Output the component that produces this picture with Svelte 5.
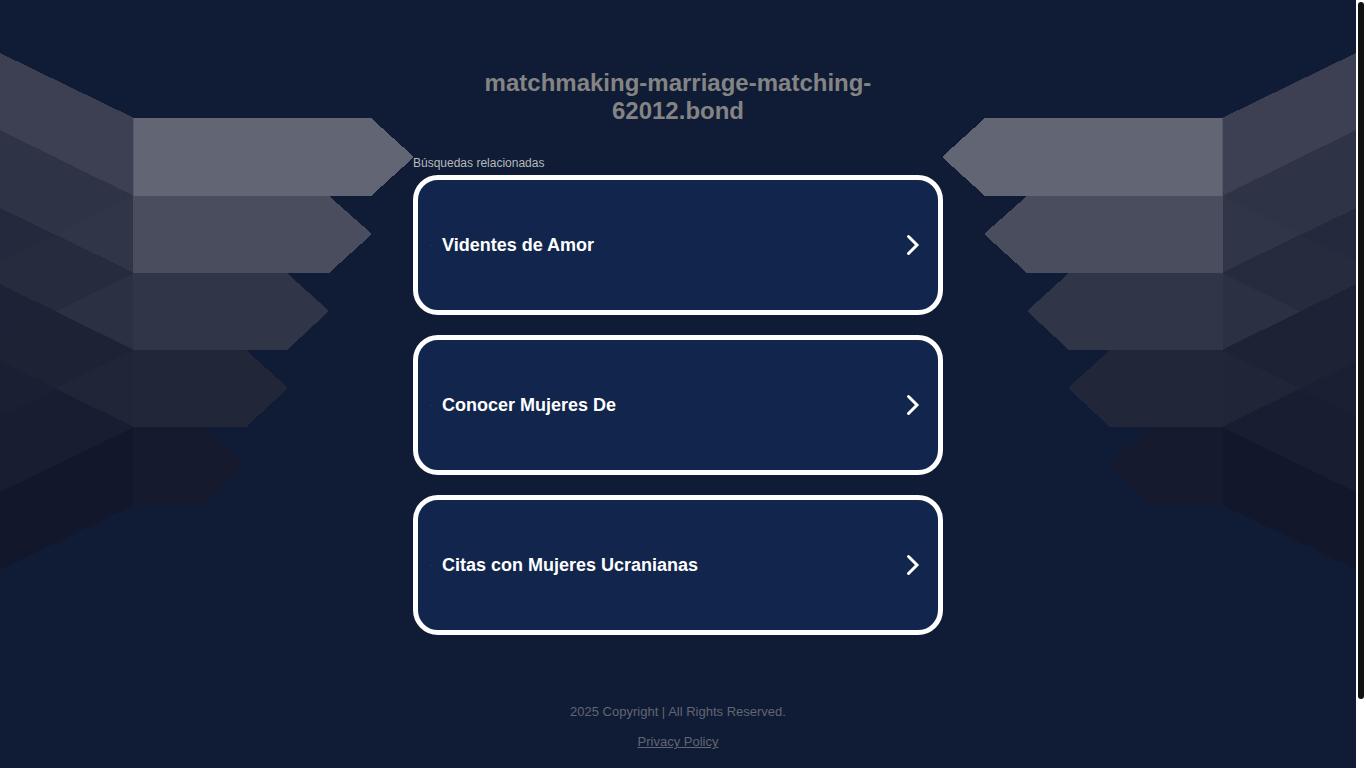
<script>
  const searches = ['Videntes de Amor', 'Conocer Mujeres De', 'Citas con Mujeres Ucranianas'];

  // Folded ribbons on the outer side, painted back to front.
  const folds = [
    ['0,53 134,118 134,505 0,570', '#3c4052'],
    ['0,130 134,196 134,505 0,570', '#2e3345'],
    ['134,196 134,505 0,570 0,261', '#313548'],
    ['0,208 134,273 134,505 0,570', '#25293d'],
    ['57,235 134,273 134,505 0,570 0,261', '#272b3e'],
    ['134,273 134,505 0,570 0,339', '#2b3042'],
    ['0,284 134,350 134,505 0,570', '#1e2236'],
    ['0,339 57,312 134,350 134,505 0,570', '#1d2235'],
    ['134,350 134,505 0,570 0,416', '#202538'],
    ['0,361 134,427 134,505 0,570', '#1a2033'],
    ['0,416 57,389 134,427 134,505 0,570', '#181d31'],
    ['134,427 134,505 0,570 0,492', '#12172b']
  ];

  const arrows = [
    ['133,118 371,118 414,157 371,196 133,196', '#626573'],
    ['133,196 329,196 372,234 329,273 133,273', '#4a4d5d'],
    ['133,273 287,273 329,311 287,350 133,350', '#303547'],
    ['133,350 246,350 288,388 246,427 133,427', '#212639'],
    ['133,427 206,427 246,465 206,505 133,505', '#151a2e']
  ];
</script>

{#snippet ribbons(flipped)}
  <svg class="ribbons" class:flipped viewBox="0 0 413 570" aria-hidden="true">
    {#each [...folds, ...arrows] as [points, fill]}
      <polygon {points} {fill} />
    {/each}
    <path d="M133 118h1v155h-1z" fill="#4a4e5f" opacity=".6" />
  </svg>
{/snippet}

<div class="window">
  <div class="page">
    {@render ribbons(false)}
    <div class="column">
      <main>
        <h1>matchmaking-marriage-matching-62012.bond</h1>
        <p class="related">Búsquedas relacionadas</p>
        <nav>
          {#each searches as search}
            <a class="card" href="#search">
              <span class="bullet"></span>
              <span class="label">{search}</span>
              <svg class="chevron" viewBox="0 0 14 22" aria-hidden="true">
                <path d="M2.5 2.5L11 11l-8.500 8.500" />
              </svg>
            </a>
          {/each}
        </nav>
      </main>
      <footer>
        <p>2025 Copyright | All Rights Reserved.</p>
        <a href="#privacy">Privacy Policy</a>
      </footer>
    </div>
    {@render ribbons(true)}
  </div>
  <div class="track"><div class="thumb"></div></div>
</div>

<style>
  :global(body) {
    margin: 0;
    background: #101c35;
  }
  .window {
    display: flex;
    min-height: 100vh;
    font-family: "Liberation Sans", Arial, sans-serif;
  }
  .page {
    flex: 1;
    display: grid;
    grid-template-columns: minmax(0, 1fr) minmax(0, 530px) minmax(0, 1fr);
    align-items: start;
    background: #101c35;
  }
  .ribbons {
    display: block;
    width: 100%;
    overflow: visible;
    shape-rendering: crispEdges;
  }
  .flipped {
    transform: scaleX(-1);
  }
  .column {
    padding-top: 69px;
  }
  h1 {
    margin: 0 auto;
    max-width: 480px;
    font-size: 24px;
    line-height: 28px;
    text-align: center;
    color: #848484;
  }
  .related {
    margin: 30px 0 4px;
    font-size: 12px;
    line-height: 16px;
    color: #b7b9bd;
  }
  nav {
    display: flex;
    flex-direction: column;
    gap: 20px;
  }
  .card {
    display: flex;
    align-items: center;
    box-sizing: border-box;
    min-height: 140px;
    padding: 0 18px 0 13px;
    border: 5px solid #fff;
    border-radius: 25px;
    background: #12264d;
    color: #fff;
    font-size: 18px;
    font-weight: 700;
    line-height: 22px;
    text-decoration: none;
  }
  .bullet {
    width: 1px;
    height: 1px;
    margin-right: 10px;
    background: #2c3e60;
  }
  .label {
    flex: 1;
  }
  .chevron {
    width: 14px;
    height: 22px;
    fill: none;
    stroke: #fff;
    stroke-width: 3;
    stroke-linecap: round;
  }
  footer {
    margin-top: 69px;
    padding-bottom: 16px;
    text-align: center;
    font-size: 13px;
    line-height: 16px;
    color: #626573;
  }
  footer p {
    margin: 0 0 14px;
  }
  footer a {
    color: #626573;
  }
  .track {
    box-sizing: border-box;
    width: 10px;
    padding: 2px;
    background: #fff;
    display: grid;
    grid-template-rows: 697fr 67fr;
  }
  .thumb {
    border-radius: 3px;
    background: #111;
  }
</style>
